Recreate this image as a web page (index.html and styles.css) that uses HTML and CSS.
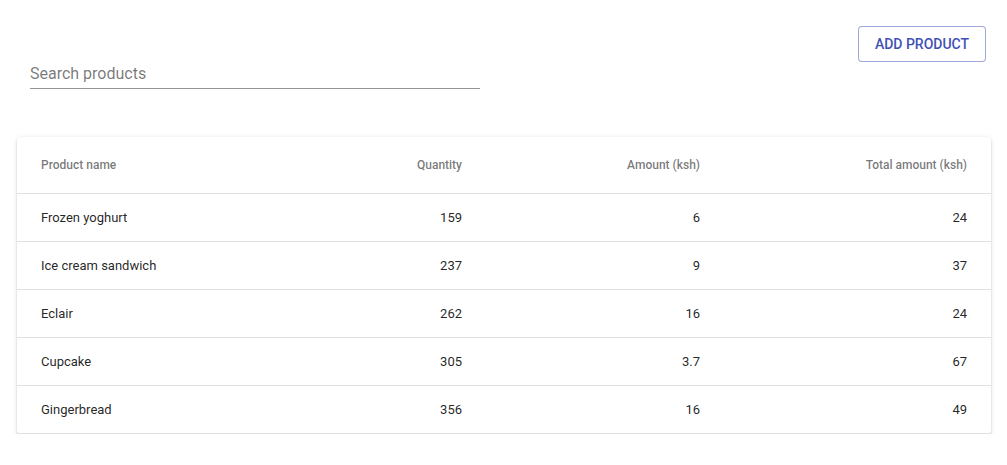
FILE: index.html
```html
<!DOCTYPE html>
<html lang="en">
<head>
<meta charset="utf-8">
<title>Products</title>
<link rel="stylesheet" href="styles.css">
</head>
<body>
<div class="toolbar">
  <div class="search">
    <input class="search-input" type="text" placeholder="Search products">
  </div>
  <button class="btn-outlined" type="button">Add product</button>
</div>
<div class="paper">
  <table class="table">
    <colgroup>
      <col class="c1"><col class="c2"><col class="c3"><col class="c4">
    </colgroup>
    <thead>
      <tr class="head-row">
        <th class="cell">Product name</th>
        <th class="cell num">Quantity</th>
        <th class="cell num">Amount (ksh)</th>
        <th class="cell num last">Total amount (ksh)</th>
      </tr>
    </thead>
    <tbody>
      <tr class="body-row"><td class="cell">Frozen yoghurt</td><td class="cell num">159</td><td class="cell num">6</td><td class="cell num last">24</td></tr>
      <tr class="body-row"><td class="cell">Ice cream sandwich</td><td class="cell num">237</td><td class="cell num">9</td><td class="cell num last">37</td></tr>
      <tr class="body-row"><td class="cell">Eclair</td><td class="cell num">262</td><td class="cell num">16</td><td class="cell num last">24</td></tr>
      <tr class="body-row"><td class="cell">Cupcake</td><td class="cell num">305</td><td class="cell num">3.7</td><td class="cell num last">67</td></tr>
      <tr class="body-row"><td class="cell">Gingerbread</td><td class="cell num">356</td><td class="cell num">16</td><td class="cell num last">49</td></tr>
    </tbody>
  </table>
</div>
</body>
</html>
```
FILE: styles.css
```css
* { box-sizing: border-box; }
html, body { margin: 0; padding: 0; background: #fff; }
body {
  font-family: Roboto, "Liberation Sans", sans-serif;
  color: rgba(0,0,0,0.87);
}
.toolbar {
  display: flex;
  justify-content: space-between;
  align-items: flex-start;
  padding-top: 26px;
}
.search {
  margin-left: 30px;
  margin-top: 30px;
  width: 450px;
  border-bottom: 1px solid rgba(0,0,0,0.42);
}
.search-input {
  display: block;
  width: 100%;
  border: 0;
  outline: 0;
  margin: 0;
  padding: 8px 0 5px;
  height: 32px;
  font-family: Roboto, "Liberation Sans", sans-serif;
  font-size: 16px;
  line-height: 19px;
  color: rgba(0,0,0,0.87);
  background: transparent;
}
.search-input::placeholder { color: rgba(0,0,0,0.54); opacity: 1; }
.btn-outlined {
  margin-right: 21px;
  height: 36px;
  width: 128px;
  padding: 0;
  text-align: center;
  white-space: nowrap;
  border: 1px solid rgba(63,81,181,0.5);
  border-radius: 4px;
  background: #fff;
  color: #3f51b5;
  font-family: Roboto, "Liberation Sans", sans-serif;
  font-size: 14px;
  font-weight: 500;
  letter-spacing: 0;
  text-transform: uppercase;
  cursor: pointer;
}
.paper {
  margin: 48px 16px 0 17px;
  background: #fff;
  border-radius: 4px;
  overflow: hidden;
  box-shadow: 0 3px 1px -2px rgba(0,0,0,0.2), 0 2px 2px 0 rgba(0,0,0,0.14), 0 1px 5px 0 rgba(0,0,0,0.12);
}
.table {
  width: 100%;
  border-collapse: collapse;
  table-layout: fixed;
}
.c1 { width: 280px; }
.c2 { width: 221px; }
.c3 { width: 238px; }
.c4 { width: 235px; }
.cell {
  padding: 0 56px 0 24px;
  border-bottom: 1px solid #e0e0e0;
  text-align: left;
  vertical-align: middle;
  white-space: nowrap;
}
.cell.num { text-align: right; }
.cell.last { padding-right: 24px; }
.head-row { height: 56px; }
.head-row .cell {
  font-size: 12px;
  font-weight: 500;
  color: rgba(0,0,0,0.54);
}
.body-row { height: 48px; }
.body-row .cell {
  font-size: 13px;
  font-weight: 400;
  color: rgba(0,0,0,0.87);
}
```
